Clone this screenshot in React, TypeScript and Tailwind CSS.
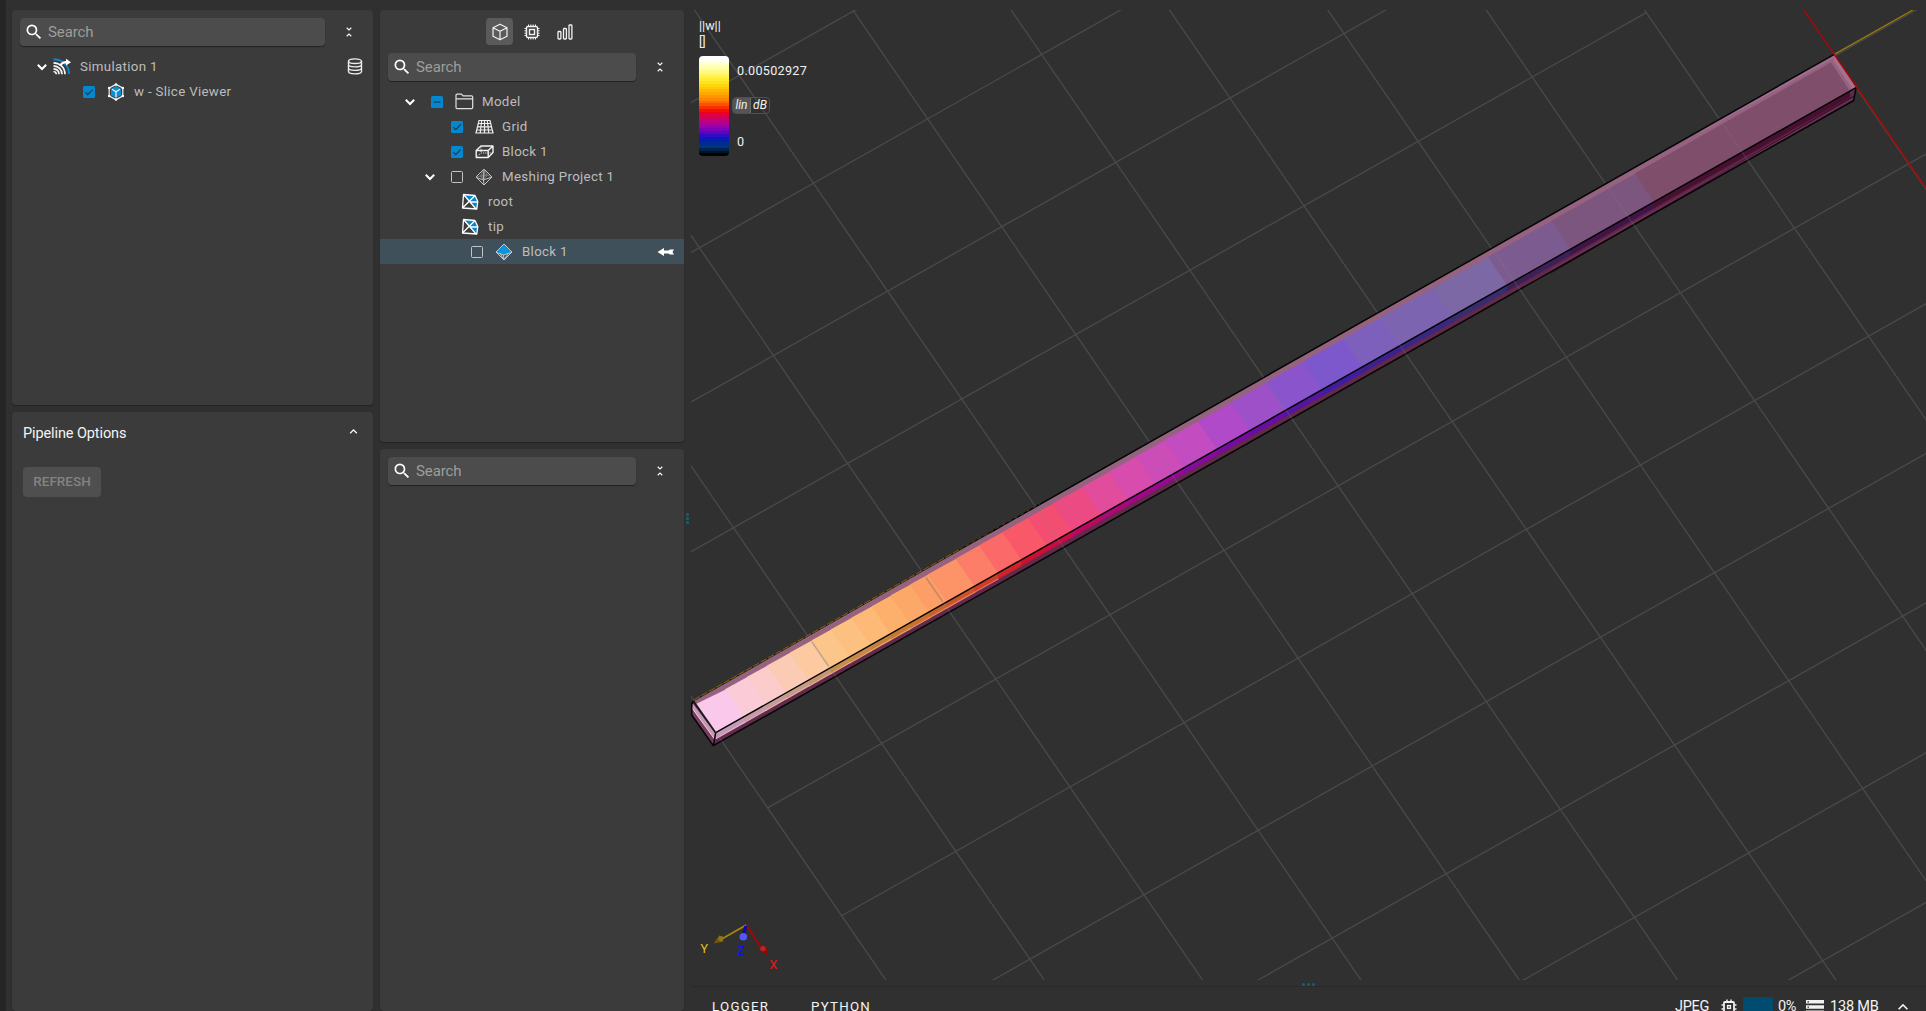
import React from "react";
import { MdSearch, MdUnfoldLess, MdExpandLess } from "react-icons/md";

type Pt = [number, number];

/* ---------- 3D scene ---------- */

const ORIGIN: Pt = [813.5, 183.3];
const U: Pt = [114.1, -64.4];
const V: Pt = [74.1, 107.85];
const node = (i: number, j: number): Pt => [
  ORIGIN[0] + i * U[0] + j * V[0],
  ORIGIN[1] + i * U[1] + j * V[1],
];
const pts = (list: Pt[]) => list.map((p) => p.join(",")).join(" ");

const lineAlong = (a: Pt, b: Pt, key: string) => (
  <line key={key} x1={a[0]} y1={a[1]} x2={b[0]} y2={b[1]} />
);

const columns = Array.from({ length: 16 }, (_, k) => k - 3);
const rows = Array.from({ length: 14 }, (_, k) => k - 1);

function Grid() {
  return (
    <>
      {columns.map((i) => lineAlong(node(i, i < 7 ? -6 : 3), node(i, 16), `c${i}`))}
      {rows.map((j) => lineAlong(node(-3, j), node(j < 3 ? 6 : 14, j), `r${j}`))}
    </>
  );
}

const slices: { x: number; top: string; side: string }[] = [
  { x: 695.5, top: "#fac8ea", side: "#c49ab4" },
  { x: 725, top: "#fbcbd8", side: "#c69ca4" },
  { x: 746.7, top: "#fbcccb", side: "#c69c98" },
  { x: 767, top: "#fbcbb6", side: "#c69c88" },
  { x: 790, top: "#fcc9a0", side: "#c69670" },
  { x: 811.7, top: "#fcc68a", side: "#c68c50" },
  { x: 830.7, top: "#fcc080", side: "#c68844" },
  { x: 851.7, top: "#fcba76", side: "#c4803c" },
  { x: 871.7, top: "#fdb06c", side: "#c47830" },
  { x: 890.7, top: "#fba868", side: "#c87030" },
  { x: 910, top: "#fc9e66", side: "#c8622c" },
  { x: 928, top: "#fc9468", side: "#cc5428" },
  { x: 955.5, top: "#fc7e68", side: "#d03c24" },
  { x: 979, top: "#fb6a68", side: "#d02428" },
  { x: 1002.4, top: "#f85868", side: "#cc1030" },
  { x: 1027.8, top: "#f34e72", side: "#c80c44" },
  { x: 1053, top: "#ec4a82", side: "#bc0860" },
  { x: 1082, top: "#e24c9c", side: "#ac0878" },
  { x: 1108.5, top: "#d84cae", side: "#a00888" },
  { x: 1136, top: "#cc4cb8", side: "#940a94" },
  { x: 1165, top: "#c24cc0", side: "#860aa0" },
  { x: 1198, top: "#b04ac8", side: "#780aa4" },
  { x: 1231, top: "#9e50c8", side: "#680ea4" },
  { x: 1266, top: "#8a54cc", side: "#5414a4" },
  { x: 1303, top: "#7c58cc", side: "#401ca4" },
  { x: 1343, top: "#7c60bc", side: "#3c2090" },
  { x: 1382, top: "#7c64b0", side: "#382884" },
  { x: 1433, top: "#7c68a4", side: "#382c70" },
  { x: 1488, top: "#7c5c90", side: "#3c2058" },
  { x: 1551.4, top: "#7c567e", side: "#401448" },
  { x: 1635, top: "#7e4e6a", side: "#481030" },
];

const topY = (x: number) => 700.7 + (x - 694) * -0.567;
const frontY = (x: number) => 732.7 + (x - 715.7) * -0.5656;
const END = 1831;

function Beam() {
  return (
    <g>
      <polygon
        points={pts([[691.5, 703], [694, 700.7], [1834.3, 54.3], [1856, 87.7], [1853.7, 100.5], [713.3, 745.6], [691.7, 715]])}
        fill="#622a4a"
      />
      <polygon points={pts([[694, 700.7], [1834.3, 54.3], [1856, 87.7], [715.7, 732.7]])} fill="#95627f" />
      {slices.map((s, k) => {
        const last = k + 1 === slices.length;
        const x0 = s.x;
        const x1 = last ? END : slices[k + 1].x + 0.6;
        const b0 = k === 0 ? 715.7 : x0 + 19;
        const b1 = last ? 1850 : x1 + 19;
        return (
          <g key={k}>
            <polygon
              points={pts([[x0, topY(x0) + (k === 0 ? 4.5 : 6.2)], [x1, topY(x1) + 6.6], [b1, frontY(b1)], [b0, frontY(b0)]])}
              fill={s.top}
            />
            <polygon
              points={pts([[b0, frontY(b0)], [b1, frontY(b1)], [b1, frontY(b1) + 5.6], [b0, frontY(b0) + 5.6]])}
              fill={s.side}
            />
            <line
              x1={b0}
              y1={frontY(b0) + 6}
              x2={b1}
              y2={frontY(b1) + 6}
              stroke={k < 13 ? s.top : s.side}
              strokeWidth={1.2}
              strokeOpacity={k < 13 ? 0.85 : 0.7}
            />
          </g>
        );
      })}
      <polygon points={pts([[1834.3, 54.3], [1856, 87.7], [1852.5, 89.5], [1833, 60]])} fill="#a5718f" />
      <polygon points={pts([[1834.3, 54.3], [1700, 130.4], [1700, 133], [1834, 58]])} fill="#a06c90" />
      <line x1="1551" y1="273" x2="1854" y2="96" stroke="#2c0a24" strokeWidth="0.9" />
      <line x1="1551" y1="269.5" x2="1855" y2="98" stroke="#8a4468" strokeWidth="0.8" strokeOpacity="0.5" />
      <polygon points={pts([[692.5, 703], [715.7, 734], [715, 739.5], [692, 708]])} fill="#c39ab4" />
      <polygon points={pts([[692, 708], [714.5, 739], [713.3, 745.6], [691.7, 715]])} fill="#7a3a62" />
      <line x1="692" y1="708" x2="714.5" y2="739" stroke="#f2dce8" strokeWidth="1" />
      <line x1="694" y1="700.4" x2="1000" y2="526.9" stroke="#1c1408" strokeWidth="1.3" />
      <g stroke="#050505" strokeWidth="1.5" fill="none" strokeLinejoin="round">
        <polyline points={pts([[990, 532.6], [1834.3, 54.3]])} />
        <polyline points={pts([[693.5, 701], [715.7, 732.7], [1856, 87.7]])} />
        <polyline points={pts([[693.5, 701], [691.7, 704], [691.7, 715], [713.3, 745.6], [1853.7, 100.5], [1856, 87.7]])} />
        <line x1="715.7" y1="732.7" x2="713.3" y2="745.6" />
      </g>
      <line x1="694" y1="700" x2="960" y2="549.2" stroke="#8c6610" strokeWidth="1" strokeDasharray="7 1.5" />
      <line x1="960" y1="549.2" x2="1040" y2="503.8" stroke="#5c4410" strokeWidth="0.9" strokeDasharray="3 4" />
      <g stroke="#808080" strokeOpacity="0.22" strokeWidth="1.4">
        {columns.filter((i) => i < 7).map((i) => lineAlong(node(i, 3), node(i, 3.38), `b${i}`))}
      </g>
      <g stroke="#606060" strokeOpacity="0.25" strokeWidth="1.5">
        {[-2, -1].map((i) => lineAlong(node(i, 3.06), node(i, 3.28), `d${i}`))}
      </g>
    </g>
  );
}

function Triad() {
  return (
    <g fontFamily="Roboto, sans-serif" fontSize="12.5" textAnchor="middle">
      <line x1="746.3" y1="925" x2="720" y2="940" stroke="#a8860c" strokeWidth="1.8" />
      <polygon points="713.5,943.5 719.5,935 723.5,941.8" fill="#6e5808" />
      <circle cx="721" cy="938.6" r="2.6" fill="#94761a" />
      <line x1="746.3" y1="925" x2="761" y2="947.5" stroke="#b00000" strokeWidth="1.8" />
      <polygon points="767.6,955.4 758.6,950.3 766.2,945.6" fill="#8c0c0c" />
      <circle cx="763" cy="948.6" r="2.7" fill="#b82424" />
      <line x1="745.6" y1="926" x2="743.8" y2="935" stroke="#0a0aa8" strokeWidth="3" />
      <circle cx="743.3" cy="936.8" r="3.8" fill="#5656f0" />
      <text x="704.3" y="953.4" fill="#e8c020">Y</text>
      <text x="740.7" y="955.2" fill="#1010f0">Z</text>
      <text x="773.3" y="969.2" fill="#f01818">X</text>
    </g>
  );
}

function Viewport() {
  return (
    <svg viewBox="691 10 1235 970" className="block h-[970px] w-[1235px]">
      <g stroke="#4a4a4a" strokeWidth="1.3">
        <Grid />
      </g>
      <line x1="1834.3" y1="54.3" x2="1913" y2="10" stroke="#98780e" strokeWidth="1.4" />
      <Beam />
      <line x1="1803.4" y1="9.5" x2="1926" y2="188" stroke="#ac0606" strokeWidth="1.4" />
      <Triad />
    </svg>
  );
}

const barColors = [
  "#ffffff", "#fffff4", "#ffffdc", "#ffffc0", "#fffea0", "#fffa84", "#fff766", "#fff24a", "#ffec30", "#ffe218", "#ffd60c",
  "#ffc808", "#ffb804", "#ffa800", "#ff9600", "#ff8400", "#ff6c00", "#ff5000", "#fb3000", "#f61000", "#ee0018", "#dc0044",
  "#cc0066", "#bc0084", "#a8009c", "#9400aa", "#7c00b8", "#5a04c0", "#300cc0", "#0818bc", "#0420a8", "#002c90", "#00347c",
  "#00244c", "#001428", "#000000",
];

function Legend() {
  return (
    <div className="absolute top-[8px] left-2 text-[12.6px] text-[#f2f2f2]">
      <div className="h-4 leading-4">||w||</div>
      <div className="h-4 leading-4">[]</div>
      <div className="mt-[6px] flex">
        <div className="flex h-[100px] w-[30px] flex-col overflow-hidden rounded-[4px]">
          {barColors.map((c) => (
            <div key={c} className="flex-1" style={{ backgroundColor: c }} />
          ))}
        </div>
        <div className="relative w-24 pt-[7px] pl-2">
          <div className="h-4 leading-4 tracking-[0.3px]">0.00502927</div>
          <div className="-ml-[5px] mt-[18px] flex h-[17px] w-[38px] overflow-hidden rounded-[4px] border border-[#505050] text-[12px] leading-[14px] italic">
            <span className="w-[18px] border-r border-[#6a6a6a] bg-[#555] text-center">lin</span>
            <span className="flex-1 text-center">dB</span>
          </div>
          <div className="mt-5 h-4 leading-4">0</div>
        </div>
      </div>
    </div>
  );
}

/* ---------- icons ---------- */

const svgBase = "block shrink-0";

const ChevronDown = () => (
  <svg viewBox="0 0 16 16" className={`${svgBase} h-4 w-4`} fill="none" stroke="#fff" strokeWidth="2">
    <path d="M3.8 5.800 8 10l4.200-4.200" />
  </svg>
);
const CubeIcon = () => (
  <svg viewBox="0 0 18 18" className={`${svgBase} h-[18px] w-[18px]`} fill="none" stroke="#f2f2f2" strokeWidth="1.2" strokeLinejoin="round">
    <path d="M9 1.2 16 4.8v8.4L9 16.8 2 13.2V4.8Z M2 4.8 9 8.2l7-3.400M9 8.200v8.600" />
  </svg>
);
const ChipIcon = () => (
  <svg viewBox="0 0 16 16" className={`${svgBase} h-4 w-4`} fill="none" stroke="#f2f2f2">
    <rect x="2.5" y="2.5" width="11" height="11" rx="1.5" strokeWidth="1.4" />
    <rect x="5.5" y="5.5" width="5" height="5" strokeWidth="1.4" />
    <path strokeWidth="1" d="M4.500 .5v2M6.800.5v2M9.200.5v2M11.500.5v2M4.500 13.500v2M6.800 13.500v2M9.200 13.500v2M11.500 13.500v2M.5 4.500h2M.5 6.800h2M.5 9.200h2M.5 11.500h2M13.500 4.500h2M13.500 6.800h2M13.500 9.200h2M13.500 11.500h2" />
  </svg>
);
const BarsIcon = () => (
  <svg viewBox="0 0 16 16" className={`${svgBase} h-4 w-4`} fill="none" stroke="#f2f2f2" strokeWidth="1.3">
    <rect x="1" y="7.5" width="2.9" height="7.5" rx=".8" />
    <rect x="6.5" y="4.5" width="2.9" height="10.5" rx=".8" />
    <rect x="12" y="1" width="2.9" height="14" rx=".8" />
  </svg>
);
const SimulationIcon = () => (
  <svg viewBox="0 0 18 17" className={`${svgBase} h-[17px] w-[18px]`} fill="none">
    <path d="M.5 1.300C9 1.300 16 7 16 16" stroke="#0a86c8" strokeWidth="2" />
    <path d="M.5 4.800c6.500.3 11.500 4.500 11.500 11.500M.5 7.800c4.800.3 8.500 3.500 8.500 8.500M.5 10.800c3.200.2 5.500 2.200 5.500 5.500M.5 13.500c1.800.2 2.800 1 2.800 2.800" stroke="#f4f4f4" strokeWidth="1.7" />
    <path d="M6.500 6.500C8.500 4 10.500 3 13 3V.8l5 3.400-5 3.400V5.500C11 5.500 9.500 6 8 8Z" fill="#fff" />
  </svg>
);
const DatabaseIcon = () => (
  <svg viewBox="0 0 16 17" className={`${svgBase} h-[17px] w-4`} fill="none" stroke="#ededed" strokeWidth="1.4">
    <ellipse cx="8" cy="3.2" rx="6.5" ry="2.3" />
    <path d="M1.500 3.200v10.400c0 3 13 3 13 0V3.200M1.500 6.600c0 3 13 3 13 0M1.500 10.100c0 3 13 3 13 0" />
  </svg>
);
const SliceCubeIcon = () => (
  <svg viewBox="0 0 18 18" className={`${svgBase} h-[18px] w-[18px]`} fill="none" strokeLinejoin="round">
    <path d="M9 3 14 5.700v6.600L9 15 4 12.300V5.700Z" fill="#0a8ed4" />
    <path d="M9 1.400 15.800 5v8L9 16.600 2.200 13V5Z" stroke="#f2f2f2" strokeWidth="1.2" />
    <path d="M5 6.300 9 8.800l4-2.500M9 8.800v5.500" stroke="#f2f2f2" strokeWidth="1.3" />
    <g fill="#fff">
      <circle cx="9" cy="1.5" r="1.3" />
      <circle cx="15.8" cy="5" r="1.3" />
      <circle cx="15.8" cy="13" r="1.3" />
      <circle cx="9" cy="16.5" r="1.3" />
      <circle cx="2.2" cy="13" r="1.3" />
      <circle cx="2.2" cy="5" r="1.3" />
    </g>
  </svg>
);
const FolderIcon = () => (
  <svg viewBox="0 0 19 17" className={`${svgBase} h-[17px] w-[19px]`} fill="none" stroke="#e2e2e2" strokeWidth="1.2" strokeLinejoin="round">
    <path d="M1 5.800V2.200C1 1.500 1.500 1.200 2 1.200h4.500L8 2.800h8.500c.8 0 1.200.4 1.200 1.200v10.500c0 .8-.4 1.200-1.200 1.200H2.200C1.400 15.700 1 15.300 1 14.500V5.800h16.700" />
  </svg>
);
const GridIcon = () => (
  <svg viewBox="0 0 19 16" className={`${svgBase} h-4 w-[19px]`} fill="none" stroke="#efefef" strokeWidth="1.2">
    <path d="M4 1.500h11l3 12.500H1ZM3.300 4.500h12.400M2.500 7.800h14M1.700 11h15.600M6.700 1.500 5.200 14M9.500 1.500V14M12.300 1.500 13.800 14" />
  </svg>
);
const BoxIcon = () => (
  <svg viewBox="0 0 19 16" className={`${svgBase} h-4 w-[19px]`} fill="none" stroke="#f2f2f2" strokeWidth="1.4" strokeLinejoin="round">
    <path d="M1.200 6.500h12V13.500h-12ZM1.200 6.500 6 2h12l-4.800 4.500M18 2v6.500l-4.800 5" />
    <path d="M2.500 12 6 9h11.500M6 8V3" strokeWidth=".9" strokeDasharray="1.2 1" />
  </svg>
);
const MeshIcon = ({ filled }: { filled?: boolean }) => (
  <svg viewBox="0 0 18 18" className={`${svgBase} h-[18px] w-[18px]`} fill="none" strokeLinejoin="round">
    {filled && <path d="M9 1 17 9.500 8.500 12 1 9.500Z" fill="#0a94da" />}
    <path d="M9 1 17 9 9 17 1 9Z" stroke="#c4c4c4" strokeWidth="1" />
    {!filled && <path d="M9 1 6.500 9 9 12 11 7Z" fill="#5c5c5c" />}
    <path
      d={filled ? "M1 9.300 8.500 12 17 9.300M8.500 12 9 17M5 10.500 9 17l4-6" : "M1 9.300 8.500 12 17 9M9 1 8.500 12 9 17"}
      stroke="#cfcfcf"
      strokeWidth=".9"
    />
    {!filled && <path d="M9 1 5.500 8 8.500 12M9 1l3.500 6-4 5M1 9l4.500-1 7-1L17 9" stroke="#9a9a9a" strokeWidth=".6" />}
  </svg>
);
const FaceIcon = () => (
  <svg viewBox="0 0 18 18" className={`${svgBase} h-[18px] w-[18px]`} fill="none" strokeLinejoin="round">
    <path d="M9 9 2.500 1.500 14 2.500l2.800 6-1 7.500Z" fill="#0a86c8" />
    <path d="M2.500 1.500 14 2.500l2.800 6-1 7.500L1.500 15ZM2.500 1.500 15.500 16.500M14 2.500 1.500 15M9 9h7.500" stroke="#fff" strokeWidth="1.3" />
  </svg>
);
const PointerIcon = () => (
  <svg viewBox="0 0 18 10" className={`${svgBase} h-[10px] w-[18px]`} fill="#fff">
    <path d="M.5 5 7 1v2.600h4.500L13 2.600H17L15.500 5 17 7.500h-4l-1.500-1H7V9Z" />
  </svg>
);
const StatusChipIcon = () => (
  <svg viewBox="0 0 16 16" className={`${svgBase} h-4 w-4`} fill="none" stroke="#f0f0f0">
    <rect x="3" y="3" width="10" height="10" rx="1" strokeWidth="1.8" />
    <rect x="6.6" y="6.6" width="2.8" height="2.8" strokeWidth="1.4" />
    <path strokeWidth="1.5" d="M6 .5v2M10 .5v2M6 13.500v2M10 13.500v2M.5 6h2M.5 10h2M13.500 6h2M13.500 10h2" />
  </svg>
);
const StorageIcon = () => (
  <svg viewBox="0 0 18 14" className={`${svgBase} h-[14px] w-[18px]`}>
    <path d="M0 0h18v3.600H0ZM0 5.200h18v3.600H0ZM0 10.400h18V14H0Z" fill="#f0f0f0" />
    <path d="M1.500 1.200H3v1.300H1.500ZM1.500 6.400H3v1.300H1.500ZM1.500 11.600H3v1.300H1.500Z" fill="#303030" />
  </svg>
);

/* ---------- panel parts ---------- */

function Checkbox({ state }: { state: "on" | "off" | "mixed" }) {
  if (state === "off") return <span className="block h-3 w-3 shrink-0 rounded-[1.5px] border-[1.5px] border-[#c4c4c4]" />;
  return (
    <span className="block h-3 w-3 shrink-0 rounded-[1.5px] bg-[#0288d1]">
      <svg viewBox="0 0 12 12" className="h-3 w-3" fill="none" stroke="#2a3a44" strokeWidth="1.3">
        <path d={state === "on" ? "M2.300 6.200 4.800 8.600 9.800 3.400" : "M2.500 6h7"} />
      </svg>
    </span>
  );
}

function SearchRow({ wide }: { wide?: boolean }) {
  return (
    <div className="flex items-center">
      <div className={`${wide ? "w-[305px]" : "w-[248px]"} flex h-7 items-center rounded-[4px] bg-[#4c4c4c] pl-1 shadow-[0_1px_1px_#222]`}>
        <MdSearch className="h-5 w-5 text-white" />
        <span className="ml-1 text-[15px] tracking-[-0.1px] text-[#9d9d9d]">Search</span>
      </div>
      <MdUnfoldLess className="ml-[17px] h-[14px] w-[14px] text-white" />
    </div>
  );
}

function Row({ pad, open, check, icon, label, gap = "ml-[9px]", selected, end }: {
  pad: string;
  open?: boolean;
  check?: "on" | "off" | "mixed";
  icon: React.ReactNode;
  label: string;
  gap?: string;
  selected?: boolean;
  end?: React.ReactNode;
}) {
  return (
    <div className={`flex h-[25px] items-center ${pad} ${selected ? "bg-[#40505a]" : ""}`}>
      {open && <span className={check ? "mr-[13px]" : "mr-[3px]"}><ChevronDown /></span>}
      {check && <Checkbox state={check} />}
      <span className={check ? "ml-3" : ""}>{icon}</span>
      <span className={`${gap} text-[13.3px] tracking-[0.32px] whitespace-nowrap text-[#bdbdbd]`}>{label}</span>
      {end && <span className="ml-auto">{end}</span>}
    </div>
  );
}

const card = "rounded-[4px] bg-[#3b3b3b] shadow-[0_1px_1px_#232323]";

export default function App() {
  return (
    <div className="flex h-[1011px] w-[1926px] overflow-hidden bg-[#303030] font-['Roboto',sans-serif]">
      <div className="w-[6px] shrink-0 bg-[#252525]" />
      <aside className="ml-[6px] flex w-[361px] shrink-0 flex-col gap-[7px] pt-[10px]">
        <section className={`${card} h-[395px] pt-2`}>
          <div className="pl-2"><SearchRow wide /></div>
          <div className="pt-[8px]">
            <Row pad="pl-[22px] pr-[10px]" open icon={<SimulationIcon />} label="Simulation 1" end={<DatabaseIcon />} />
            <Row pad="pl-[71px]" check="on" icon={<SliceCubeIcon />} label="w - Slice Viewer" />
          </div>
        </section>
        <section className={`${card} flex-1 pt-3 pr-3 pl-[11px]`}>
          <div className="flex h-5 items-center justify-between">
            <span className="text-[14.5px] tracking-[-0.1px] text-[#f4f4f4]">Pipeline Options</span>
            <MdExpandLess className="mb-[5px] h-[15px] w-[15px] text-white" />
          </div>
          <button className="mt-[23px] block h-[30px] w-[78px] rounded-[4px] bg-[#4f4f4f] pb-px text-[13.5px] font-medium text-[#838383]">REFRESH</button>
        </section>
      </aside>
      <aside className="ml-[7px] flex w-[304px] shrink-0 flex-col gap-[7px] pt-[10px]">
        <section className={`${card} h-[432px] pt-2`}>
          <div className="flex h-[27px] items-center pl-[106px]">
            <span className="flex h-[27px] w-[27px] items-center justify-center rounded-[4px] bg-[#5a5a5a]"><CubeIcon /></span>
            <span className="ml-[11px]"><ChipIcon /></span>
            <span className="ml-[17px]"><BarsIcon /></span>
          </div>
          <div className="mt-2 pl-2"><SearchRow /></div>
          <div className="pt-[8px]">
            <Row pad="pl-[22px]" open check="mixed" icon={<FolderIcon />} label="Model" gap="ml-2" />
            <Row pad="pl-[71px]" check="on" icon={<GridIcon />} label="Grid" gap="ml-2" />
            <Row pad="pl-[71px]" check="on" icon={<BoxIcon />} label="Block 1" gap="ml-2" />
            <Row pad="pl-[42px]" open check="off" icon={<MeshIcon />} label="Meshing Project 1" />
            <Row pad="pl-[81px]" icon={<FaceIcon />} label="root" />
            <Row pad="pl-[81px]" icon={<FaceIcon />} label="tip" />
            <Row pad="pl-[91px] pr-[9px]" check="off" icon={<MeshIcon filled />} label="Block 1" selected end={<PointerIcon />} />
          </div>
        </section>
        <section className={`${card} flex-1 pt-2 pl-2`}>
          <SearchRow />
        </section>
      </aside>
      <div className="flex w-[7px] shrink-0 flex-col items-center gap-px pt-[513px]">
        {[0, 1, 2].map((k) => <span key={k} className="h-[3px] w-[3px] rounded-full bg-[#15617f]" />)}
      </div>
      <main className="flex min-w-0 flex-1 flex-col pt-[10px]">
        <div className="relative h-[970px] shrink-0">
          <Viewport />
          <Legend />
        </div>
        <div className="flex h-[7px] shrink-0 items-center justify-center gap-[2px] border-b border-[#292929] pt-[2px]">
          {[0, 1, 2].map((k) => <span key={k} className="h-[3px] w-[3px] rounded-full bg-[#15617f]" />)}
        </div>
        <footer className="flex h-[38px] shrink-0 pl-[21px] text-[#f4f4f4]">
          <span className="mt-[12px] h-4 w-[99px] text-[13.3px] leading-4 tracking-[1.25px]">LOGGER</span>
          <span className="mt-[12px] h-4 text-[13.3px] leading-4 tracking-[1.25px]">PYTHON</span>
          <div className="mt-[10px] ml-auto flex h-[19px] items-center pr-[13px] text-[14.5px]">
            <span className="w-[46px] tracking-[-0.3px]">JPEG</span>
            <StatusChipIcon />
            <span className="ml-[6px] h-[19px] w-[30px] rounded-[2px] bg-[#004c70]" />
            <span className="ml-[5px] w-[28px] tracking-[-0.3px]">0%</span>
            <StorageIcon />
            <span className="ml-[6px] w-[63px] tracking-[-0.2px]">138 MB</span>
            <MdExpandLess className="h-5 w-5" />
          </div>
        </footer>
      </main>
    </div>
  );
}
